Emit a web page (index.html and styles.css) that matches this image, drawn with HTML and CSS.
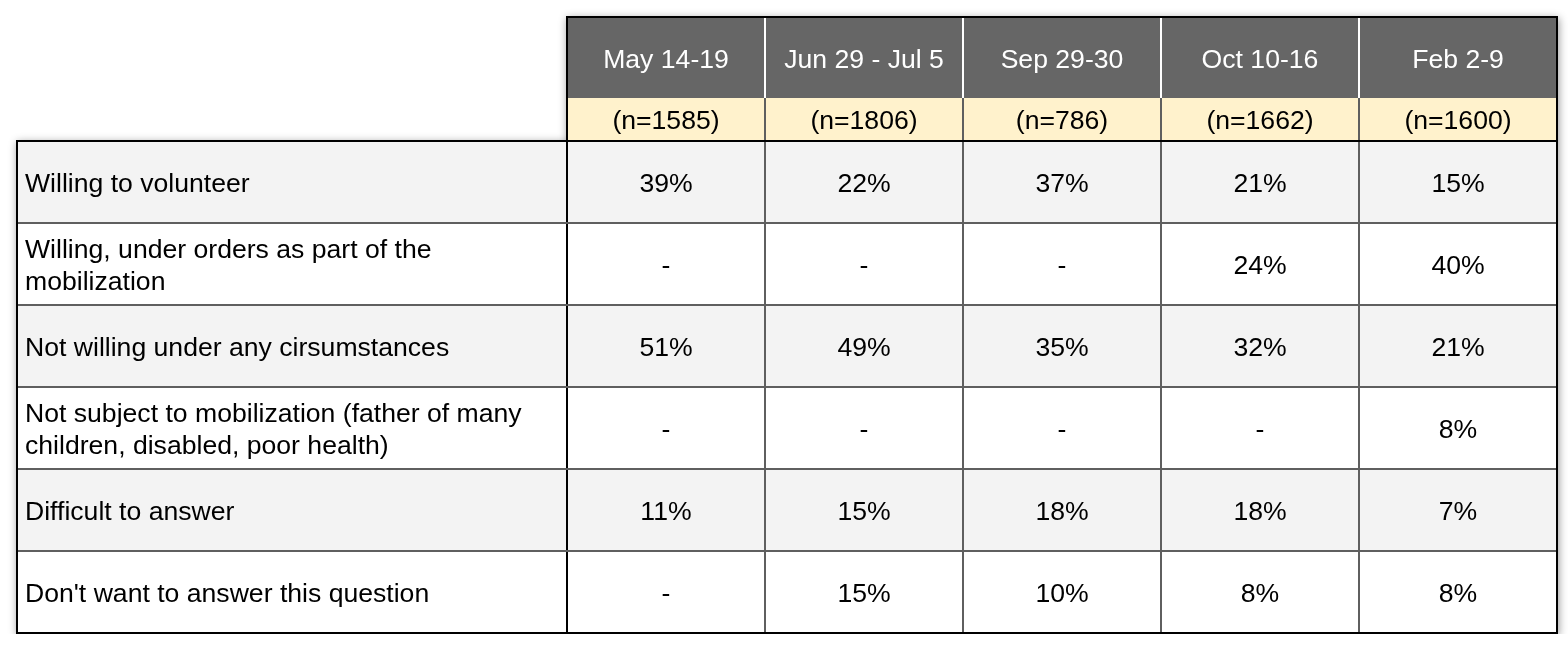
FILE: index.html
```html
<!DOCTYPE html>
<html>
<head>
<meta charset="utf-8">
<link rel="stylesheet" href="styles.css">
</head>
<body>
<div class="sheet">
  <div class="head">
    <div class="hcell">May 14-19</div>
    <div class="hcell">Jun 29 - Jul 5</div>
    <div class="hcell">Sep 29-30</div>
    <div class="hcell">Oct 10-16</div>
    <div class="hcell last">Feb 2-9</div>
    <div class="ncell">(n=1585)</div>
    <div class="ncell">(n=1806)</div>
    <div class="ncell">(n=786)</div>
    <div class="ncell">(n=1662)</div>
    <div class="ncell last">(n=1600)</div>
  </div>
  <div class="body">
    <div class="row alt">
      <div class="lab">Willing to volunteer</div>
      <div class="val">39%</div><div class="val">22%</div><div class="val">37%</div><div class="val">21%</div><div class="val last">15%</div>
    </div>
    <div class="row">
      <div class="lab">Willing, under orders as part of the<br>mobilization</div>
      <div class="val">-</div><div class="val">-</div><div class="val">-</div><div class="val">24%</div><div class="val last">40%</div>
    </div>
    <div class="row alt">
      <div class="lab">Not willing under any cirsumstances</div>
      <div class="val">51%</div><div class="val">49%</div><div class="val">35%</div><div class="val">32%</div><div class="val last">21%</div>
    </div>
    <div class="row">
      <div class="lab">Not subject to mobilization (father of many<br>children, disabled, poor health)</div>
      <div class="val">-</div><div class="val">-</div><div class="val">-</div><div class="val">-</div><div class="val last">8%</div>
    </div>
    <div class="row alt">
      <div class="lab">Difficult to answer</div>
      <div class="val">11%</div><div class="val">15%</div><div class="val">18%</div><div class="val">18%</div><div class="val last">7%</div>
    </div>
    <div class="row">
      <div class="lab">Don't want to answer this question</div>
      <div class="val">-</div><div class="val">15%</div><div class="val">10%</div><div class="val">8%</div><div class="val last">8%</div>
    </div>
  </div>
</div>
</body>
</html>
```
FILE: styles.css
```css
* { box-sizing: border-box; }
html, body { margin: 0; padding: 0; background: #fff; }
body {
  font-family: "Liberation Sans", Arial, sans-serif;
  font-size: 26.6px;
  line-height: 32px;
  color: #000;
}
.sheet {
  width: max-content;
  padding: 16px 0 0 16px;
  filter: drop-shadow(1px 2px 4px rgba(0, 0, 0, 0.4));
}
.head {
  width: max-content;
  margin-left: 550px;
  display: grid;
  grid-template-columns: repeat(4, 198px) 196px;
  grid-template-rows: 80px 42px;
  border: 2px solid #000;
  position: relative;
  z-index: 1;
}
.hcell {
  background: #666666;
  color: #fff;
  border-right: 2px solid #fff;
  display: flex;
  align-items: center;
  justify-content: center;
  padding-top: 1px;
}
.ncell {
  background: #fff2cc;
  border-right: 2px solid #5f5f5f;
  display: flex;
  align-items: center;
  justify-content: center;
  padding-top: 2px;
}
.hcell.last, .ncell.last { border-right: 0; }
.body {
  width: max-content;
  margin-top: -2px;
  border: 2px solid #000;
  background: #fff;
}
.row {
  display: grid;
  grid-template-columns: 550px repeat(4, 198px) 196px;
  height: 82px;
  border-bottom: 2px solid #5f5f5f;
}
.row:last-child { height: 80px; border-bottom: 0; }
.row.alt { background: #f3f3f3; }
.lab {
  border-right: 2px solid #000;
  padding-left: 7px;
  padding-top: 2px;
  display: flex;
  align-items: center;
}
.val {
  border-right: 2px solid #5f5f5f;
  display: flex;
  align-items: center;
  justify-content: center;
  padding-top: 2px;
}
.val.last { border-right: 0; }
```
